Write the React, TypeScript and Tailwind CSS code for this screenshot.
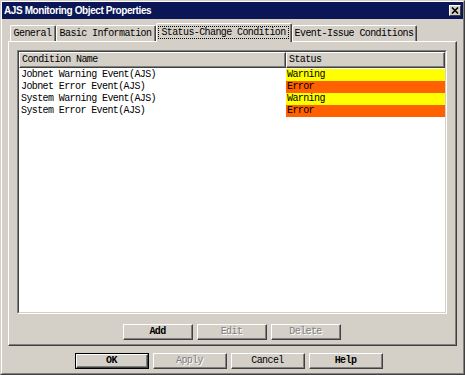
import React from 'react';

const MONO = "font-['Liberation_Mono','DejaVu_Sans_Mono',monospace]";

const ROWS = [
  { name: 'Jobnet Warning Event(AJS)', status: 'Warning' },
  { name: 'Jobnet Error Event(AJS)', status: 'Error' },
  { name: 'System Warning Event(AJS)', status: 'Warning' },
  { name: 'System Error Event(AJS)', status: 'Error' },
];

const STATUS_BG: Record<string, string> = {
  Warning: 'bg-[#ffff00]',
  Error: 'bg-[#ff6000]',
};

function Button({
  label,
  width,
  bold,
  disabled,
  isDefault,
}: {
  label: string;
  width: string;
  bold?: boolean;
  disabled?: boolean;
  isDefault?: boolean;
}) {
  const text = disabled
    ? 'text-[#808080] [text-shadow:1px_1px_0_#ffffff]'
    : 'text-black';
  return (
    <div className={`${width} h-[16px] ${isDefault ? 'border border-black' : ''}`}>
      <div className="h-full border-t border-l border-r border-b border-t-white border-l-white border-r-[#404040] border-b-[#404040]">
        <div
          className={`h-full flex items-center justify-center border-r border-b border-r-[#808080] border-b-[#808080] text-[10px] tracking-[-0.6px] ${MONO} ${bold ? 'font-bold' : ''} ${text}`}
        >
          {label}
        </div>
      </div>
    </div>
  );
}

function Tab({ label, width, selected }: { label: string; width: string; selected?: boolean }) {
  if (selected) {
    return (
      <div
        className={`${width} h-[19px] -mb-px z-10 bg-[#d4d0c8] border-t border-l border-t-white border-l-white border-r border-r-[#404040] rounded-t-[2px]`}
      >
        <div className="h-full border-r border-r-[#808080] flex items-start justify-center pt-[2px]">
          <span
            className={`px-[2px] border border-dotted border-black leading-[11px] text-[10px] tracking-[-0.6px] ${MONO}`}
          >
            {label}
          </span>
        </div>
      </div>
    );
  }
  return (
    <div
      className={`${width} h-[16px] border-t border-l border-t-white border-l-white border-r border-r-[#404040] rounded-t-[2px]`}
    >
      <div className="h-full border-r border-r-[#808080] flex items-start justify-center pt-[2px]">
        <span className={`leading-[11px] text-[10px] tracking-[-0.6px] ${MONO}`}>{label}</span>
      </div>
    </div>
  );
}

export default function App() {
  return (
    <div className="w-[465px] h-[375px] bg-[#d4d0c8] border border-t-[#d4d0c8] border-l-[#d4d0c8] border-r-[#404040] border-b-[#404040] text-black">
      <div className="h-full border border-t-white border-l-white border-r-[#808080] border-b-[#808080] flex flex-col">
        {/* Title bar */}
        <div className="h-[17px] bg-[#0a1655] flex items-center justify-between pl-[2px] pr-[2px]">
          <span className="text-white font-bold text-[10px] tracking-[-0.4px] font-['Liberation_Sans_Narrow','Liberation_Sans',sans-serif]">
            AJS Monitoring Object Properties
          </span>
          <div className="w-[12px] h-[11px] bg-[#d4d0c8] border border-t-white border-l-white border-r-[#404040] border-b-[#404040] flex items-center justify-center">
            <svg width="8" height="7" viewBox="0 0 8 7">
              <path d="M1 0.5 L7 6.5 M7 0.5 L1 6.5" stroke="#000" strokeWidth="1.6" />
            </svg>
          </div>
        </div>

        {/* Tabs */}
        <div className="mt-[5px] ml-[8px] h-[17px] flex items-end">
          <Tab label="General" width="w-[46px]" />
          <Tab label="Basic Information" width="w-[100px]" />
          <Tab label="Status-Change Condition" width="w-[136px]" selected />
          <Tab label="Event-Issue Conditions" width="w-[125px]" />
        </div>

        {/* Tab panel */}
        <div className="ml-[6px] w-[449px] h-[305px] border-t border-l border-r border-b border-t-white border-l-white border-r-[#404040] border-b-[#404040]">
          <div className="h-full border-r border-b border-r-[#808080] border-b-[#808080] pl-[8px] pt-[8px] flex flex-col">
            {/* List view */}
            <div className="w-[430px] h-[264px] border border-t-[#808080] border-l-[#808080] border-r-white border-b-white">
              <div className="h-full bg-white border border-t-[#404040] border-l-[#404040] border-r-[#d4d0c8] border-b-[#d4d0c8]">
                <div className="flex h-[16px]">
                  <div className="w-[267px] bg-[#d4d0c8] border-t border-l border-r border-b border-t-white border-l-white border-r-[#404040] border-b-[#404040]">
                    <div className={`h-full border-r border-b border-r-[#808080] border-b-[#808080] pl-[2px] text-[10px] tracking-[-0.6px] leading-[14px] ${MONO}`}>
                      Condition Name
                    </div>
                  </div>
                  <div className="w-[159px] bg-[#d4d0c8] border-t border-l border-r border-b border-t-white border-l-white border-r-[#404040] border-b-[#404040]">
                    <div className={`h-full border-r border-b border-r-[#808080] border-b-[#808080] pl-[2px] text-[10px] tracking-[-0.6px] leading-[14px] ${MONO}`}>
                      Status
                    </div>
                  </div>
                </div>
                <div className="mt-[1px] flex flex-col">
                  {ROWS.map((r) => (
                    <div key={r.name} className={`flex h-[12px] text-[10px] tracking-[-0.6px] leading-[12px] ${MONO}`}>
                      <div className="w-[267px] pl-[2px]">{r.name}</div>
                      <div className={`w-[159px] pl-[1px] ${STATUS_BG[r.status]}`}>{r.status}</div>
                    </div>
                  ))}
                </div>
              </div>
            </div>

            {/* List buttons */}
            <div className="mt-[10px] flex justify-center gap-[4px] pr-[8px]">
              <Button label="Add" width="w-[70px]" bold />
              <Button label="Edit" width="w-[70px]" disabled />
              <Button label="Delete" width="w-[70px]" disabled />
            </div>
          </div>
        </div>

        {/* Dialog buttons */}
        <div className="mt-[7px] pl-[73px] flex gap-[4px]">
          <Button label="OK" width="w-[74px]" bold isDefault />
          <Button label="Apply" width="w-[74px]" disabled />
          <Button label="Cancel" width="w-[74px]" />
          <Button label="Help" width="w-[74px]" bold />
        </div>
      </div>
    </div>
  );
}
